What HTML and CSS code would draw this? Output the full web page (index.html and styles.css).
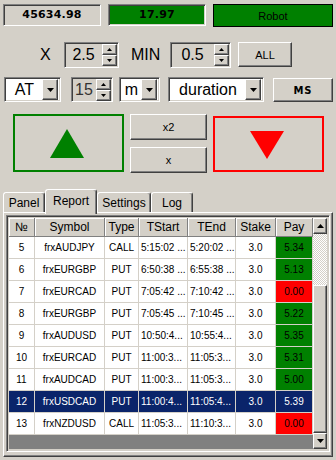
FILE: index.html
```html
<!DOCTYPE html>
<html>
<head>
<meta charset="utf-8">
<link rel="stylesheet" href="styles.css">
</head>
<body>
<div class="row top">
  <div class="stat sunk s1">45634.98</div>
  <div class="stat sunk s2">17.97</div>
  <div class="robot">Robot</div>
</div>

<div class="row r2">
  <span class="lbl lx">X</span>
  <div class="spin sunk sp1">
    <span class="val">2.5</span>
    <div class="arrows">
      <div class="ab raised"><svg width="5" height="3" viewBox="0 0 5 3"><path d="M2.5 0L5 3H0z"/></svg></div>
      <div class="ab raised"><svg width="5" height="3" viewBox="0 0 5 3"><path d="M0 0H5L2.5 3z"/></svg></div>
    </div>
  </div>
  <span class="lbl lmin">MIN</span>
  <div class="spin sunk sp2">
    <span class="val">0.5</span>
    <div class="arrows">
      <div class="ab raised"><svg width="5" height="3" viewBox="0 0 5 3"><path d="M2.5 0L5 3H0z"/></svg></div>
      <div class="ab raised"><svg width="5" height="3" viewBox="0 0 5 3"><path d="M0 0H5L2.5 3z"/></svg></div>
    </div>
  </div>
  <div class="btn raised all">ALL</div>
</div>

<div class="row r3">
  <div class="combo sunk c-at">
    <span class="cval">AT</span>
    <div class="dd raised"><svg width="7" height="4" viewBox="0 0 7 4"><path d="M0 0H7L3.5 4z"/></svg></div>
  </div>
  <div class="spin sunk sp3">
    <span class="val dim">15</span>
    <div class="arrows">
      <div class="ab raised"><svg width="5" height="3" viewBox="0 0 5 3"><path d="M2.5 0L5 3H0z"/></svg></div>
      <div class="ab raised"><svg width="5" height="3" viewBox="0 0 5 3"><path d="M0 0H5L2.5 3z"/></svg></div>
    </div>
  </div>
  <div class="combo sunk c-m">
    <span class="cval">m</span>
    <div class="dd raised"><svg width="7" height="4" viewBox="0 0 7 4"><path d="M0 0H7L3.5 4z"/></svg></div>
  </div>
  <div class="combo sunk c-dur">
    <span class="cval">duration</span>
    <div class="dd raised"><svg width="7" height="4" viewBox="0 0 7 4"><path d="M0 0H7L3.5 4z"/></svg></div>
  </div>
  <div class="btn raised ms">MS</div>
</div>

<div class="row r4">
  <div class="big up">
    <svg width="34" height="29" viewBox="0 0 34 29"><polygon points="17,0 34,29 0,29" fill="#008000"/></svg>
  </div>
  <div class="mid">
    <div class="btn raised x2">x2</div>
    <div class="btn raised x1">x</div>
  </div>
  <div class="big down">
    <svg width="34" height="28" viewBox="0 0 34 28"><polygon points="0,0 34,0 17,28" fill="#ff0000"/></svg>
  </div>
</div>

<div class="tabs">
  <div class="tab t-panel">Panel</div>
  <div class="tab sel t-report">Report</div>
  <div class="tab t-settings">Settings</div>
  <div class="tab t-log">Log</div>
</div>

<div class="panel">
  <div class="list">
    <div class="grid">
      <div class="tr head">
        <div class="th">№</div><div class="th">Symbol</div><div class="th">Type</div><div class="th">TStart</div><div class="th">TEnd</div><div class="th">Stake</div><div class="th">Pay</div>
      </div>
      <div class="tr"><div class="td">5</div><div class="td">frxAUDJPY</div><div class="td">CALL</div><div class="td tm">5:15:02 ...</div><div class="td tm">5:20:02 ...</div><div class="td">3.0</div><div class="td win">5.34</div></div>
      <div class="tr"><div class="td">6</div><div class="td">frxEURGBP</div><div class="td">PUT</div><div class="td tm">6:50:38 ...</div><div class="td tm">6:55:38 ...</div><div class="td">3.0</div><div class="td win">5.13</div></div>
      <div class="tr"><div class="td">7</div><div class="td">frxEURCAD</div><div class="td">PUT</div><div class="td tm">7:05:42 ...</div><div class="td tm">7:10:42 ...</div><div class="td">3.0</div><div class="td loss">0.00</div></div>
      <div class="tr"><div class="td">8</div><div class="td">frxEURGBP</div><div class="td">PUT</div><div class="td tm">7:05:45 ...</div><div class="td tm">7:10:45 ...</div><div class="td">3.0</div><div class="td win">5.22</div></div>
      <div class="tr"><div class="td">9</div><div class="td">frxAUDUSD</div><div class="td">PUT</div><div class="td tm">10:50:4...</div><div class="td tm">10:55:4...</div><div class="td">3.0</div><div class="td win">5.35</div></div>
      <div class="tr"><div class="td">10</div><div class="td">frxEURCAD</div><div class="td">PUT</div><div class="td tm">11:00:3...</div><div class="td tm">11:05:3...</div><div class="td">3.0</div><div class="td win">5.31</div></div>
      <div class="tr"><div class="td">11</div><div class="td">frxAUDCAD</div><div class="td">PUT</div><div class="td tm">11:00:3...</div><div class="td tm">11:05:3...</div><div class="td">3.0</div><div class="td win">5.00</div></div>
      <div class="tr selrow"><div class="td">12</div><div class="td">frxUSDCAD</div><div class="td">PUT</div><div class="td tm">11:00:4...</div><div class="td tm">11:05:4...</div><div class="td">3.0</div><div class="td">5.39</div></div>
      <div class="tr"><div class="td">13</div><div class="td">frxNZDUSD</div><div class="td">CALL</div><div class="td tm">11:05:3...</div><div class="td tm">11:10:3...</div><div class="td">3.0</div><div class="td loss">0.00</div></div>
      <div class="empty"></div>
    </div>
    <div class="vscroll">
      <div class="sb raised"><svg width="7" height="4" viewBox="0 0 7 4"><path d="M3.5 0L7 4H0z"/></svg></div>
      <div class="track"></div>
      <div class="thumb raised"></div>
      <div class="sb raised"><svg width="7" height="4" viewBox="0 0 7 4"><path d="M0 0H7L3.5 4z"/></svg></div>
    </div>
  </div>
</div>
</body>
</html>
```

FILE: styles.css
```css
* { box-sizing: border-box; margin: 0; padding: 0; }
html, body { width: 336px; height: 460px; overflow: hidden; }
body {
  background: #d4d0c8;
  font-family: "Liberation Sans", Arial, sans-serif;
  font-size: 11px;
  color: #000;
}
.row { display: flex; align-items: flex-start; }

.sunk {
  border: 1px solid;
  border-color: #808080 #fff #fff #808080;
  box-shadow: inset 1px 1px #404040, inset -1px -1px #d4d0c8;
}
.raised {
  background: #d4d0c8;
  border: 1px solid;
  border-color: #fff #404040 #404040 #fff;
  box-shadow: inset -1px -1px #808080;
}

/* top row */
.top { padding-top: 4px; }
.stat {
  width: 98px; height: 22px;
  display: flex; align-items: center; justify-content: center;
  font: bold 11px "DejaVu Sans", sans-serif;
  padding-bottom: 1px;
  letter-spacing: 0.2px;
}
.s1 { margin-left: 3px; }
.s2 { margin-left: 7px; background: #008000; }
.robot {
  margin-left: 7px; width: 120px; height: 23px;
  background: #008000; border: 1px solid #000;
  display: flex; align-items: center; justify-content: center;
  font-size: 11px;
}

/* row 2 */
.r2 { margin-top: 15px; height: 26px; }
.lbl { font-size: 16px; line-height: 26px; display: block; }
.lx { margin-left: 40px; width: 12px; }
.lmin { margin-left: 12px; width: 27px; }
.spin {
  display: flex; align-items: center; height: 26px;
  background: #d4d0c8;
}
.sp1 { margin-left: 12px; width: 55px; }
.sp2 { margin-left: 12px; width: 61px; }
.val { flex: 1; text-align: center; font-size: 16px; }
.dim { color: #333; }
.arrows { display: flex; flex-direction: column; width: 15px; margin-right: 1px; }
.ab { height: 11px; display: flex; align-items: center; justify-content: center; }
.btn {
  display: flex; align-items: center; justify-content: center;
  font-size: 11px;
}
.all { margin-left: 7px; width: 54px; height: 25px; }

/* row 3 */
.r3 { margin-top: 9px; height: 25px; }
.combo {
  display: flex; align-items: center; height: 25px;
  background: #fff; padding: 2px;
}
.cval { flex: 1; text-align: center; font-size: 16px; }
.dd { width: 16px; height: 21px; display: flex; align-items: center; justify-content: center; }
.c-at { margin-left: 4px; width: 57px; }
.sp3 { margin-left: 10px; width: 42px; height: 25px; }
.c-m { margin-left: 6px; width: 41px; }
.c-dur { margin-left: 8px; width: 96px; }
.ms {
  margin-left: 9px; margin-top: 1px; width: 60px; height: 24px;
  font: bold 10px "DejaVu Sans", sans-serif; letter-spacing: 1px;
}

/* row 4 */
.r4 { margin-top: 12px; }
.big {
  width: 111px;
  display: flex; align-items: center; justify-content: center;
  padding-right: 4px;
}
.up { margin-left: 13px; height: 58px; border: 2px solid #008000; }
.down { margin-left: 6px; margin-top: 2px; height: 56px; border: 2px solid #ff0000; padding-top: 2px; }
.mid { margin-left: 6px; width: 77px; display: flex; flex-direction: column; }
.x2 { height: 26px; }
.x1 { height: 26px; margin-top: 7px; }

/* tabs */
.tabs {
  display: flex; align-items: flex-end;
  height: 23px; margin-top: 16px; padding-left: 3px;
  position: relative; z-index: 2;
}
.tab {
  height: 20px;
  border: 1px solid; border-bottom: none;
  border-color: #fff #404040 transparent #fff;
  box-shadow: inset -1px 0 #808080;
  border-radius: 3px 3px 0 0;
  background: #d4d0c8;
  font-size: 12px;
  display: flex; align-items: center; justify-content: center;
}
.tab.sel { height: 25px; margin-bottom: -2px; padding-bottom: 3px; }
.t-panel { width: 42px; }
.t-report { width: 52px; }
.t-settings { width: 54px; }
.t-log { width: 42px; }

/* panel */
.panel {
  margin-left: 3px; width: 330px; height: 245px;
  border: 1px solid;
  border-color: #fff #404040 #404040 #fff;
  box-shadow: inset -1px -1px #808080;
  padding: 2px 0 0 2px;
}
.list {
  display: flex;
  width: 324px; height: 237px;
  border: 1px solid;
  border-color: #808080 #fff #fff #808080;
  box-shadow: inset 1px 1px #404040, inset -1px -1px #d4d0c8;
  padding: 2px 2px 2px 2px;
}
.grid { width: 304px; display: flex; flex-direction: column; background: #808080; }
.tr {
  display: grid;
  grid-template-columns: 26px 70px 34px 49px 48px 40px 37px;
  height: 22px;
  background: #fff;
}
.head { height: 19px; background: #d4d0c8; }
.th {
  font-size: 12px;
  display: flex; align-items: center; justify-content: center;
  border-right: 1px solid #808080;
  border-bottom: 1px solid #808080;
  box-shadow: inset 1px 1px #fff;
  white-space: nowrap; overflow: hidden;
}
.td {
  font-size: 10px;
  display: flex; align-items: center; justify-content: center;
  border-right: 1px solid #d4d0c8;
  border-bottom: 1px solid #d4d0c8;
  white-space: nowrap; overflow: hidden;
}
.td.tm { justify-content: flex-start; padding-left: 2px; }
.win { background: #008000; }
.loss { background: #ff0000; }
.selrow { background: #0a246a; color: #fff; }
.empty { flex: 1; background: #808080; }

.vscroll { width: 16px; display: flex; flex-direction: column; }
.sb { height: 16px; display: flex; align-items: center; justify-content: center; }
.track {
  height: 51px;
  background: repeating-conic-gradient(#d4d0c8 0 25%, #fff 0 50%) 0 0 / 2px 2px;
}
.thumb { flex: 1; }
```
